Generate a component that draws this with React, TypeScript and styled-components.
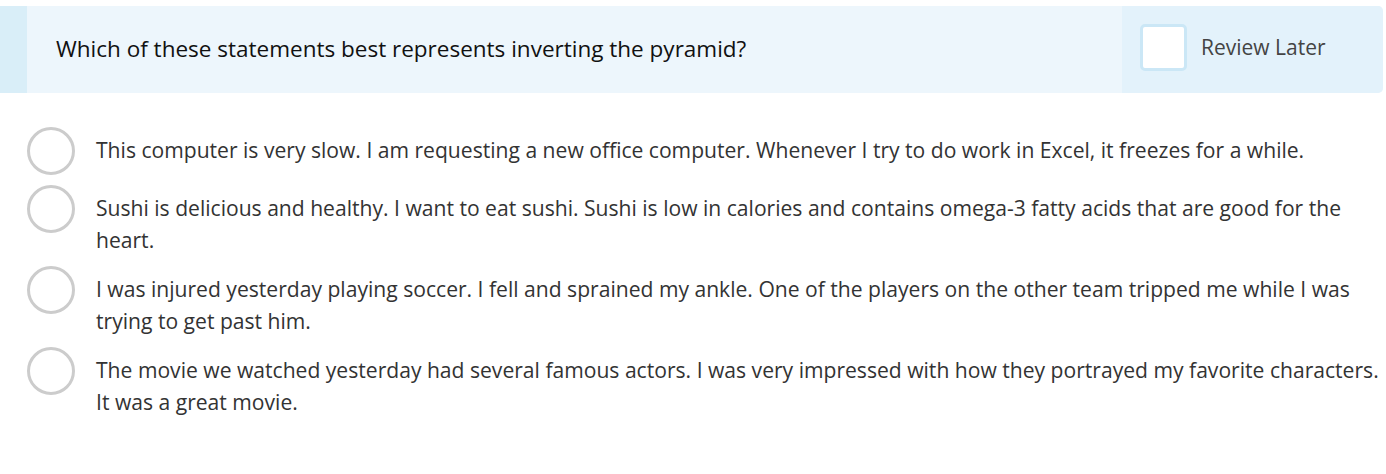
import { createGlobalStyle } from "styled-components";
import styled from "styled-components";

const GlobalStyle = createGlobalStyle`
	body {
		margin: 0;
		background: #fff;
		font-family: "Open Sans", "Noto Sans", sans-serif;
	}
`;

const options = [
	"This computer is very slow. I am requesting a new office computer. Whenever I try to do work in Excel, it freezes for a while.",
	"Sushi is delicious and healthy. I want to eat sushi. Sushi is low in calories and contains omega-3 fatty acids that are good for the heart.",
	"I was injured yesterday playing soccer. I fell and sprained my ankle. One of the players on the other team tripped me while I was trying to get past him.",
	"The movie we watched yesterday had several famous actors. I was very impressed with how they portrayed my favorite characters. It was a great movie.",
];

const App = () => {
	return (
		<>
			<GlobalStyle />
			<Page>
				<Header>
					<Strip />
					<Question>Which of these statements best represents inverting the pyramid?</Question>
					<Review>
						<Box />
						<ReviewLabel>Review Later</ReviewLabel>
					</Review>
				</Header>
				<Options>
					{options.map((o) => (
						<Option key={o}>
							<Radio />
							<OptionText>{o}</OptionText>
						</Option>
					))}
				</Options>
			</Page>
		</>
	);
};

const Page = styled.div`
	width: 1383px;
	padding-top: 6px;
`;
const Header = styled.div`
	display: flex;
	height: 87px;
	background: #edf6fc;
	border-radius: 0 5px 5px 0;
	overflow: hidden;
`;
const Strip = styled.div`
	width: 27px;
	background: #d9eef8;
`;
const Question = styled.div`
	flex: 1;
	display: flex;
	align-items: center;
	padding-left: 29px;
	padding-bottom: 2px;
	font-size: 22.5px;
	color: #111;
`;
const Review = styled.div`
	width: 261px;
	background: #e3f2fb;
	display: flex;
	align-items: center;
	padding-left: 18px;
	padding-bottom: 5px;
	box-sizing: border-box;
	gap: 14px;
`;
const Box = styled.div`
	width: 47px;
	height: 47px;
	box-sizing: border-box;
	background: #fff;
	border: 3px solid #cbe7f6;
	border-radius: 5px;
`;
const ReviewLabel = styled.span`
	font-size: 21px;
	color: #444;
`;
const Options = styled.div`
	display: flex;
	flex-direction: column;
	gap: 10px;
	padding: 34px 0 0 27px;
`;
const Option = styled.div`
	display: flex;
	align-items: flex-start;
	gap: 21px;
`;
const Radio = styled.div`
	flex: none;
	width: 48px;
	height: 48px;
	box-sizing: border-box;
	border: 3px solid #cccccc;
	border-radius: 50%;
`;
const OptionText = styled.div`
	padding-top: 7px;
	font-size: 21.1px;
	line-height: 32px;
	color: #333;
`;

export default App;
